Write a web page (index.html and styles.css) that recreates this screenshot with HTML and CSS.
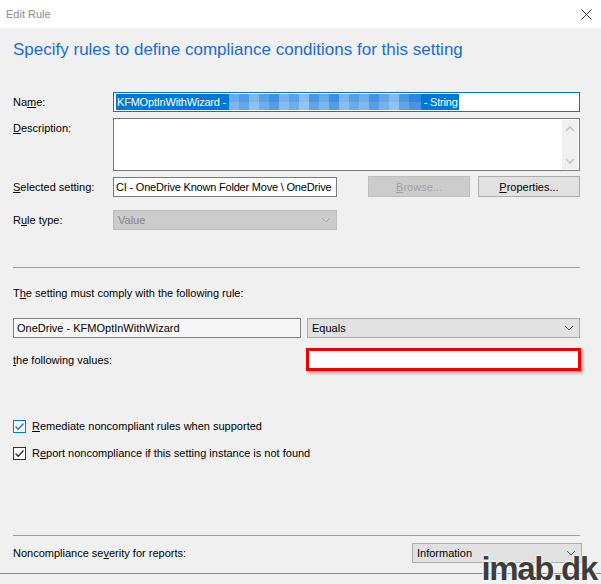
FILE: index.html
```html
<!DOCTYPE html>
<html lang="en">
<head>
    <meta charset="UTF-8">
    <title>Edit Rule</title>
    <link rel="stylesheet" href="styles.css">
</head>
<body>
    <div class="dialog">
        <div class="titlebar">
            <span>Edit Rule</span>
            <svg class="close" width="11" height="11" viewBox="0 0 11 11">
                <path d="M0.5 0.5 L10.5 10.5 M10.5 0.5 L0.5 10.5" stroke="#3c3c3c" stroke-width="1" fill="none"/>
            </svg>
        </div>

        <div class="heading">Specify rules to define compliance conditions for this setting</div>

        <div class="form">
            <div class="row name-row">
                <label class="label">Na<u>m</u>e:</label>
                <div class="textbox focused">
                    <span class="selection">KFMOptInWithWizard - <span class="blur"></span> - String</span>
                </div>
            </div>

            <div class="row desc-row">
                <label class="label"><u>D</u>escription:</label>
                <div class="textarea">
                    <div class="scrollbar">
                        <svg width="10" height="6" viewBox="0 0 10 6"><path d="M1 5 L5 1 L9 5" stroke="#c2c2c2" stroke-width="1.5" fill="none"/></svg>
                        <svg width="10" height="6" viewBox="0 0 10 6"><path d="M1 1 L5 5 L9 1" stroke="#c2c2c2" stroke-width="1.5" fill="none"/></svg>
                    </div>
                </div>
            </div>

            <div class="row setting-row">
                <label class="label"><u>S</u>elected setting:</label>
                <div class="textbox short">CI - OneDrive Known Folder Move \ OneDrive</div>
                <button class="btn disabled" disabled><u>B</u>rowse...</button>
                <button class="btn"><u>P</u>roperties...</button>
            </div>

            <div class="row type-row">
                <label class="label">R<u>u</u>le type:</label>
                <div class="select short disabled">
                    <span>Value</span>
                    <svg width="10" height="6" viewBox="0 0 10 6"><path d="M1 1 L5 5 L9 1" stroke="#a8a8a8" stroke-width="1" fill="none"/></svg>
                </div>
            </div>

            <div class="separator sep-top"></div>

            <div class="plain comply">T<u>h</u>e setting must comply with the following rule:</div>

            <div class="row rule-row">
                <div class="textbox readonly">OneDrive - KFMOptInWithWizard</div>
                <div class="select equals">
                    <span>Equals</span>
                    <svg width="10" height="6" viewBox="0 0 10 6"><path d="M1 1 L5 5 L9 1" stroke="#5a5a5a" stroke-width="1" fill="none"/></svg>
                </div>
            </div>

            <div class="row values-row">
                <label class="plain"><u>t</u>he following values:</label>
                <div class="value-box"></div>
            </div>

            <div class="check-row first">
                <span class="checkbox blue">
                    <svg width="11" height="11" viewBox="0 0 11 11"><path d="M1.5 5.5 L4.2 8.3 L9.5 2.5" stroke="#0078d7" stroke-width="1.3" fill="none"/></svg>
                </span>
                <span><u>R</u>emediate noncompliant rules when supported</span>
            </div>
            <div class="check-row">
                <span class="checkbox">
                    <svg width="11" height="11" viewBox="0 0 11 11"><path d="M1.5 5.5 L4.2 8.3 L9.5 2.5" stroke="#333" stroke-width="1.3" fill="none"/></svg>
                </span>
                <span>R<u>e</u>port noncompliance if this setting instance is not found</span>
            </div>

            <div class="separator sep-bottom"></div>

            <div class="row severity-row">
                <label class="plain">Noncompliance se<u>v</u>erity for reports:</label>
                <div class="select info">
                    <span>Information</span>
                    <svg width="10" height="6" viewBox="0 0 10 6"><path d="M1 1 L5 5 L9 1" stroke="#5a5a5a" stroke-width="1" fill="none"/></svg>
                </div>
            </div>
        </div>

        <div class="footer-line"></div>
        <div class="watermark">imab.dk</div>
    </div>
</body>
</html>
```

FILE: styles.css
```css
/* Windows style Edit Rule dialog */
body {
    margin: 0;
    font-family: "Liberation Sans", Arial, sans-serif;
    font-size: 11px;
    color: #000;
    background-color: #f0f0f0;
}

.dialog {
    position: relative;
    width: 601px;
    height: 584px;
    overflow: hidden;
    background-color: #f0f0f0;
}

.titlebar {
    height: 27px;
    background: #ffffff;
    display: flex;
    align-items: center;
    justify-content: space-between;
    padding: 0 9px 1px 6px;
    color: #8c8c8c;
    font-size: 11px;
}

.close {
    margin-top: 1px;
}

.heading {
    margin: 12px 0 0 13px;
    font-size: 17px;
    line-height: 20px;
    color: #1c6dd0;
}

.form {
    padding: 0 21px 0 13px;
}

.row {
    display: flex;
    align-items: center;
}

.label {
    width: 100px;
    flex-shrink: 0;
    line-height: 20px;
}

.plain {
    line-height: 20px;
}

u {
    text-decoration: underline;
    text-underline-offset: 1px;
}

.textbox {
    box-sizing: border-box;
    height: 20px;
    border: 1px solid #7a7a7a;
    background: #ffffff;
    padding: 0 3px;
    line-height: 18px;
    white-space: nowrap;
    overflow: hidden;
}

.textbox.focused {
    flex: 1;
    border-color: #0078d7;
    padding: 1px 2px;
    line-height: 16px;
    letter-spacing: -0.2px;
}

.selection {
    display: inline-block;
    background: #0078d7;
    color: #ffffff;
    padding: 0 1px;
    height: 16px;
    line-height: 16px;
}

.blur {
    display: inline-block;
    vertical-align: top;
    width: 192px;
    height: 16px;
    background:
        linear-gradient(180deg, rgba(255, 255, 255, 0) 0 8px, rgba(255, 255, 255, 0.12) 8px 16px),
        linear-gradient(90deg,
            #6aaceb 0 10px, #4f9be4 10px 20px, #7fb8ee 20px 30px, #5aa2e7 30px 40px,
            #3f90e1 40px 50px, #76b3ed 50px 60px, #5ba3e7 60px 70px, #86bcef 70px 80px,
            #4a97e3 80px 90px, #68abea 90px 100px, #3d8fe1 100px 110px, #7ab5ee 110px 120px,
            #559fe6 120px 130px, #6fafec 130px 140px, #4592e2 140px 150px, #62a8e9 150px 160px,
            #82baef 160px 170px, #4b98e3 170px 180px, #2f86dd 180px 192px);
}

.name-row {
    margin-top: 32px;
}

.desc-row {
    margin-top: 6px;
    align-items: flex-start;
}

.textarea {
    box-sizing: border-box;
    flex: 1;
    height: 53px;
    border: 1px solid #7a7a7a;
    background: #ffffff;
    display: flex;
    justify-content: flex-end;
    padding: 1px;
}

.scrollbar {
    width: 16px;
    background: #f0f0f0;
    display: flex;
    flex-direction: column;
    justify-content: space-between;
    align-items: center;
    padding: 6px 0 5px;
}

.setting-row {
    margin-top: 5px;
    height: 21px;
}

.textbox.short {
    width: 224px;
    padding: 0 2px;
    letter-spacing: -0.2px;
}

.btn {
    box-sizing: border-box;
    width: 102px;
    height: 21px;
    border: 1px solid #adadad;
    background: #e1e1e1;
    font-family: inherit;
    font-size: 11px;
    color: #000;
    padding: 0;
}

.btn.disabled {
    margin-left: 31px;
    margin-right: 8px;
    background: #cccccc;
    border-color: #bfbfbf;
    color: #a0a0a0;
}

.type-row {
    margin-top: 13px;
}

.select {
    box-sizing: border-box;
    height: 20px;
    border: 1px solid #adadad;
    background: #e1e1e1;
    display: flex;
    align-items: center;
    justify-content: space-between;
    padding: 0 5px 0 4px;
}

.select.short {
    width: 224px;
}

.select.disabled {
    background: #cccccc;
    border-color: #bfbfbf;
    color: #838383;
}

.separator {
    height: 1px;
    background: #a0a0a0;
    width: 567px;
}

.sep-top {
    margin-top: 37px;
}

.comply {
    margin-top: 15px;
}

.rule-row {
    margin-top: 15px;
}

.textbox.readonly {
    width: 288px;
    background: #f7f7f7;
    border-color: #838383;
}

.select.equals {
    width: 273px;
    margin-left: 6px;
}

.values-row {
    margin-top: 10px;
    justify-content: space-between;
}

.value-box {
    box-sizing: border-box;
    width: 275px;
    height: 23px;
    margin-right: -1px;
    background: #ffffff;
    border: 3px solid #ee0000;
    box-shadow: 2px 2px 3px rgba(0, 0, 0, 0.35);
}

.check-row {
    display: flex;
    align-items: center;
    height: 20px;
    margin-top: 7px;
}

.check-row.first {
    margin-top: 45px;
}

.checkbox {
    box-sizing: border-box;
    width: 13px;
    height: 13px;
    border: 1px solid #333333;
    background: #ffffff;
    display: flex;
    align-items: center;
    justify-content: center;
    margin-right: 6px;
}

.checkbox.blue {
    border-color: #0078d7;
}

.sep-bottom {
    margin-top: 72px;
}

.severity-row {
    margin-top: 7px;
    justify-content: space-between;
}

.select.info {
    width: 170px;
    margin-right: -2px;
}

.footer-line {
    margin-top: 10px;
    height: 1px;
    background: #8a8a8a;
}

.watermark {
    position: absolute;
    right: 4px;
    bottom: 0;
    font-size: 33px;
    line-height: 30px;
    font-weight: bold;
    letter-spacing: -1.3px;
    color: #3d3d3d;
    text-shadow: 0 0 2px #ffffff, 0 0 2px #ffffff, 0 0 3px #ffffff;
}
```
